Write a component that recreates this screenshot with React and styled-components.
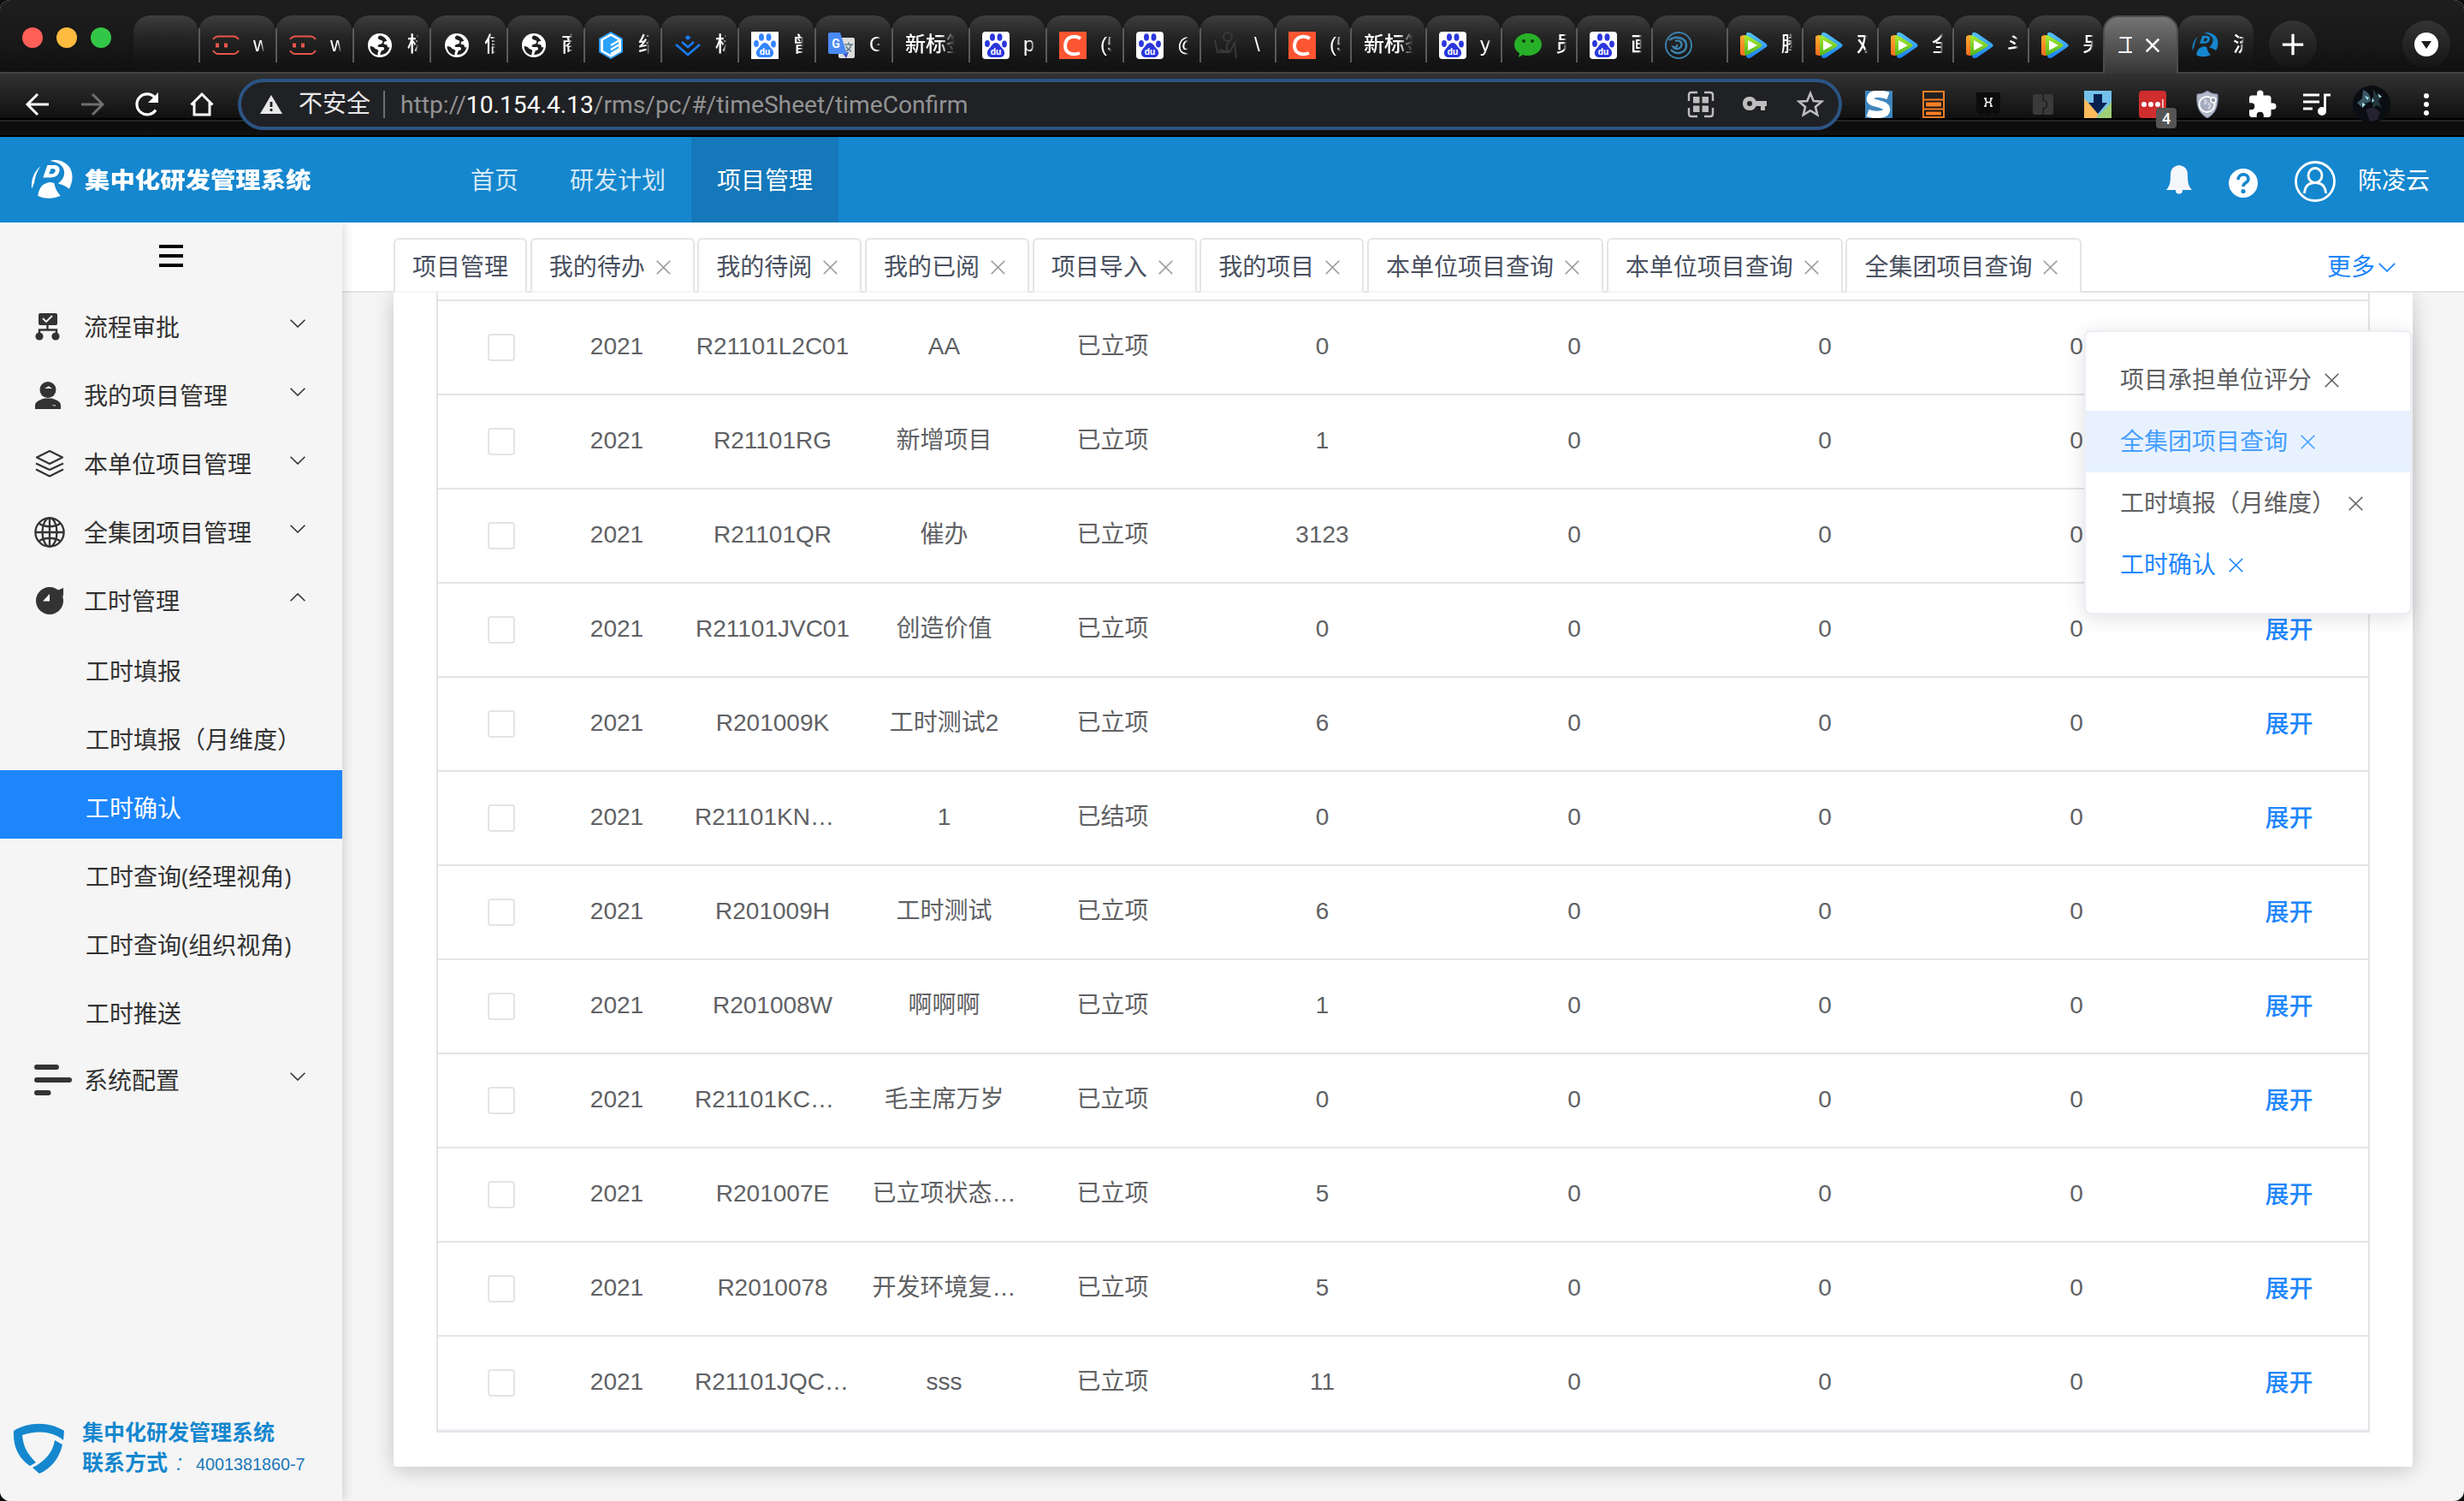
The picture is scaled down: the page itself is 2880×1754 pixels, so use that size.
import React from 'react';
import styled, { createGlobalStyle, css } from 'styled-components';

const SANS = '"Liberation Sans", "Noto Sans CJK SC", sans-serif';
const BLUE = '#1d86fd';
const LINE = '#e4e4e4';

const GlobalStyle = createGlobalStyle`
  * { box-sizing: border-box; }
  body { margin: 0; background: #0b0f0b; font-family: ${SANS}; }
`;

const Window = styled.div`
  width: 2880px;
  height: 1754px;
  display: flex;
  flex-direction: column;
  overflow: hidden;
  border-radius: 12px;
  background: #f5f5f5;
  font-size: 28px;
`;

/* ---------- browser chrome ---------- */

const TabStrip = styled.div`
  height: 84px;
  flex: none;
  display: flex;
  align-items: flex-start;
  background: linear-gradient(#1e1e1e, #181818 60%, #101010);
`;

const Lights = styled.div`
  width: 156px;
  height: 84px;
  padding: 4px 0 0 26px;
  display: flex;
  align-items: center;
  gap: 16px;
`;

const Light = styled.span`
  width: 24px;
  height: 24px;
  border-radius: 50%;
  background: ${(p) => p.$color};
`;

const BrowserTab = styled.div`
  width: ${(p) => p.$width}px;
  height: 66px;
  margin-top: 18px;
  display: flex;
  align-items: center;
  flex: none;
  border-radius: 20px 20px 0 0;
  background: linear-gradient(#3e3e3e, #262626 35%, #161616 75%, #111111);
  color: #fff;
`;

const TabInner = styled.div`
  height: 40px;
  padding-left: 14px;
  border-left: 2px solid ${(p) => (p.$divider ? '#5a5a5a' : 'transparent')};
  display: flex;
  align-items: center;
  margin-top: 3px;
`;

const TabTitle = styled.span`
  width: ${(p) => (p.$plain ? 58 : 13)}px;
  margin-left: ${(p) => (p.$plain ? 0 : 16)}px;
  overflow: hidden;
  white-space: nowrap;
  font-size: 24px;
  font-weight: 500;
  line-height: 36px;
  padding-bottom: 1px;
  mask-image: linear-gradient(90deg, #000 70%, transparent);
`;

const ActiveTab = styled.div`
  width: 88px;
  height: 68px;
  margin: 18px 0 -2px;
  padding-left: 15px;
  display: flex;
  align-items: center;
  gap: 16px;
  flex: none;
  position: relative;
  z-index: 1;
  border-radius: 18px 18px 0 0;
  border: 2px solid #4c4c4c;
  border-bottom: 0;
  background: linear-gradient(#747474, #555 50%, #363636);
  color: #fff;
  font-size: 24px;
  line-height: 36px;
`;

const Clip = styled.span`
  width: 17px;
  overflow: hidden;
  white-space: nowrap;
`;

const RoundButton = styled.div`
  width: 56px;
  height: 56px;
  margin: 24px 0 0 ${(p) => p.$gap}px;
  border-radius: 50%;
  display: flex;
  align-items: center;
  justify-content: center;
  background: linear-gradient(#343434, #141414);
`;

const Toolbar = styled.div`
  height: 76px;
  flex: none;
  padding: 0 12px;
  display: flex;
  align-items: center;
  background: linear-gradient(
    #434343 0 2px, #323232 2px, #101010 54px, #000 54px 56px,
    #242424 56px 58px, #0c0c0c 58px, #101010 74px, #000 74px
  );
`;

const Tool = styled.div`
  width: 64px;
  height: 60px;
  display: flex;
  align-items: center;
  justify-content: center;
  flex: none;
  position: relative;
`;

const AddressBar = styled.div`
  width: 1875px;
  height: 60px;
  margin: 0 11px 0 10px;
  padding: 0 1px 0 22px;
  flex: none;
  display: flex;
  align-items: center;
  border: 4px solid #2c5483;
  border-radius: 30px;
  background: #202124;
  color: #e8e8e8;
`;

const Insecure = styled.span`
  margin-left: 19px;
  font-size: 28px;
  line-height: 40px;
`;

const Separator = styled.span`
  width: 2px;
  height: 32px;
  margin: 0 18px 0 15px;
  background: #6d6e70;
`;

const Url = styled.span`
  flex: 1;
  font-family: Roboto, sans-serif;
  font-size: 28.2px;
  color: #919294;
  line-height: 40px;
  padding-top: 1px;
  b { font-weight: 400; color: #fff; }
`;

const Count = styled.span`
  position: absolute;
  left: 36px;
  top: 34px;
  width: 24px;
  height: 24px;
  border-radius: 4px;
  background: #555;
  color: #fff;
  font: 500 18px/26px Roboto, sans-serif;
  text-align: center;
`;

/* ---------- application header ---------- */

const Header = styled.header`
  height: 100px;
  flex: none;
  display: flex;
  align-items: center;
  padding-left: 36px;
  background: #1587ce;
  color: #fff;
`;

const Brand = styled.div`
  width: 484px;
  display: flex;
  align-items: center;
  gap: 12px;
`;

const BrandName = styled.span`
  padding-top: 2px;
  font-size: 29.4px;
  line-height: 40px;
  font-weight: 900;
  transform: scaleY(0.9);
  white-space: nowrap;
`;

const NavItem = styled.a`
  height: 100px;
  padding: 0 30px;
  line-height: 103px;
  color: ${(p) => (p.$active ? '#fff' : '#d3e8f6')};
  background: ${(p) => (p.$active ? '#1478ba' : 'transparent')};
`;

const UserArea = styled.div`
  margin-left: auto;
  padding-right: 40px;
  display: flex;
  align-items: center;
  line-height: 40px;
`;

const UserName = styled.span`
  padding-top: 3px;
`;

const IconBox = styled.span`
  display: flex;
  margin: ${(p) => p.$m || 0};
`;

/* ---------- sidebar ---------- */

const Body = styled.div`
  flex: 1;
  display: flex;
  min-height: 0;
`;

const Sidebar = styled.aside`
  width: 400px;
  flex: none;
  display: flex;
  flex-direction: column;
  position: relative;
  z-index: 3;
  background: #f5f5f5;
  box-shadow: 2px 0 12px rgba(0, 0, 0, 0.16);
  clip-path: inset(0 -20px 0 0);
  color: #333;
`;

const Toggle = styled.div`
  height: 80px;
  padding-top: 26px;
  display: flex;
  flex-direction: column;
  align-items: center;
  gap: 7px;
`;

const Bar = styled.span`
  width: 28px;
  height: 4px;
  background: #000;
`;

const MenuItem = styled.div`
  height: 80px;
  padding-left: 40px;
  padding-right: 43px;
  display: flex;
  align-items: center;
`;

const MenuIcon = styled.span`
  width: 58px;
  display: flex;
  padding-top: 3px;
`;

const MenuLabel = styled.span`
  flex: 1;
  line-height: 40px;
  padding-top: 8px;
`;

const MenuArrow = styled.span`
  display: flex;
  padding-bottom: 5px;
`;

const SubItem = styled.div`
  height: 80px;
  padding: 9px 0 0 100px;
  font-family: "Open Sans", "Noto Sans CJK SC", sans-serif;
  line-height: 70px;
  white-space: nowrap;
  color: ${(p) => (p.$active ? '#fff' : '#333')};
  background: ${(p) => (p.$active ? BLUE : 'transparent')};
`;

const Support = styled.div`
  margin-top: auto;
  padding: 0 0 25px 15px;
  display: flex;
  align-items: center;
  gap: 20px;
  color: #1587ce;
`;

const SupportText = styled.div`
  font-size: 25px;
  line-height: 35px;
  font-weight: 700;
  white-space: nowrap;
`;

const SupportLine = styled.div`
  display: flex;
  align-items: baseline;
`;

const Tick = styled.i`
  margin-left: 10px;
  width: 23px;
  font-weight: 500;
`;

const Phone = styled.span`
  font-size: 19.8px;
  font-weight: 400;
  color: #1a78b8;
`;

/* ---------- content ---------- */

const Main = styled.main`
  flex: 1;
  display: flex;
  flex-direction: column;
  position: relative;
  min-width: 0;
`;

const PageTabs = styled.div`
  height: 82px;
  flex: none;
  padding: 18px 80px 0 60px;
  display: flex;
  align-items: stretch;
  gap: 3.67px;
  position: relative;
  z-index: 1;
  background: linear-gradient(#fff 0 80px, ${LINE} 80px);
`;

const PageTab = styled.div`
  height: 64px;
  padding: 4px ${(p) => (p.$closable ? 26 : 20)}px 0 20px;
  display: flex;
  align-items: center;
  gap: 13px;
  flex: none;
  border: 2px solid ${LINE};
  border-bottom-color: #f5f5f5;
  border-radius: 6px 6px 0 0;
  background: #fff;
  color: #495060;
  line-height: 40px;
  white-space: nowrap;
`;

const TabLabel = styled.span`
  padding-top: 2px;
`;

const More = styled.div`
  margin-left: auto;
  display: flex;
  align-items: center;
  gap: 4px;
  height: 64px;
  padding-top: 4px;
  line-height: 40px;
  color: ${BLUE};
`;

const Card = styled.section`
  width: 2360px;
  height: 1372px;
  margin-left: 60px;
  padding: 0 50px;
  background: #fff;
  border-radius: 0 0 4px 4px;
  box-shadow: 0 4px 24px rgba(0, 0, 0, 0.2);
`;

const Table = styled.div`
  width: 2260px;
  padding-top: 8px;
  border: 2px solid ${LINE};
  border-top: 0;
`;

const Row = styled.div`
  height: 110px;
  display: grid;
  grid-template-columns: 128px 162px 202px 199px 195px 295px 294px 292px 296px 193px;
  align-items: center;
  border-top: 2px solid ${LINE};
  color: #606164;
  text-align: center;
  line-height: 40px;
  &:last-child {
    height: 112px;
    border-bottom: 2px solid #ebeef5;
  }
`;

const Cell = styled.span`
  padding-bottom: 2px;
  white-space: nowrap;
`;

const CodeCell = styled(Cell)`
  padding-left: ${(p) => (p.$truncated ? 10 : 0)}px;
  text-align: ${(p) => (p.$truncated ? 'left' : 'center')};
`;

const Checkbox = styled.span`
  width: 32px;
  height: 32px;
  margin-left: 58px;
  border: 2px solid ${LINE};
  border-radius: 4px;
  background: #fff;
`;

const Expand = styled.a`
  padding: 1px 0 0 8px;
  font-weight: 500;
  color: ${BLUE};
`;

const Dropdown = styled.div`
  position: absolute;
  z-index: 2;
  left: 2036px;
  top: 126px;
  width: 383px;
  padding: 20px 0;
  border: 2px solid #ebeef5;
  border-radius: 8px;
  background: #fff;
  box-shadow: 0 4px 24px rgba(0, 0, 0, 0.12);
`;

const tones = {
  normal: css`color: #606164;`,
  hover: css`color: #479fff; background: #e8f2ff;`,
  active: css`color: ${BLUE};`,
};

const DropItem = styled.div`
  height: 72px;
  padding-left: 40px;
  display: flex;
  align-items: center;
  gap: 15px;
  line-height: 40px;
  ${(p) => tones[p.$tone]}
`;

/* ---------- icons ---------- */

const Close = ({ size = 17, width = 1.6, color = 'currentColor' }) => (
  <svg width={size} height={size} viewBox="0 0 17 17" fill="none" stroke={color} strokeWidth={width}>
    <path d="M.7.7l15.6 15.6M16.3.7.7 16.3" />
  </svg>
);

const Chevron = ({ up, size = 18 }) => (
  <svg width={size} height={size / 2 + 1} viewBox="0 0 18 10" fill="none" stroke="currentColor" strokeWidth="1.6">
    <path d={up ? 'M.6 9.3 9 1l8.4 8.3' : 'M.6.7 9 9 17.4.7'} />
  </svg>
);

const Emblem = ({ size, color }) => (
  <svg width={size} height={size * 0.9} viewBox="0 0 50 45" fill={color}>
    <path d="M11 7C4 13 0 22 1 33l3-7C5 18 8 12 11 7Z" />
    <path d="M22 1c9-3 18 1 23 8 4 8 3 16-1 24-4-3-8-5-13-6 7-5 9-12 6-18C34 4 28 2 22 1Z" />
    <path fillRule="evenodd" d="M19 6h9c5 1 6 5 4 9-2 4-5 5-9 5H14Zm4 4-2 6h3c4 0 6-6 2-6Z" />
    <path d="M17 27c-5 1-8 8-9 14 7 4 18 4 26 0-4-5-6-8-7-14-3-2-7-2-10 0Z" />
  </svg>
);

const Face = () => (
  <svg width="32" height="32" viewBox="0 0 32 32" fill="none" stroke="#e8564a" strokeWidth="2">
    <path d="M1 9c2-2.500 3-3.500 6-3.500h18c3 0 4 1 6 3.500M1 22c2 3 3 4 6 4h18c3 0 4-1 6-4" />
    <path d="M6 13.500v5M16 13.500v5" strokeWidth="4" />
  </svg>
);

const GlobeTab = () => (
  <svg width="32" height="32" viewBox="0 0 32 32">
    <circle cx="16" cy="16" r="14" fill="#fff" />
    <path fill="#1e1e1e" d="M16 4.500c-3 1.500-3 4 0 5l3 1c1 3-1 4-4 4.500-2 1-2 3 1 3h4c2 2 1 4-2 4l-2 5c6 0 10-3 11.500-9-2 1-3 0-3-2.500l-4-1c0-3 2-4 4-3.500C22 7 20 5 16 4.500ZM4.500 17c0 5 4 10 9 10.500v-3c2-2 0-4-3-4.500-1-2-3-3-6-3Z" />
  </svg>
);

const Hex = () => (
  <svg width="32" height="32" viewBox="0 0 32 32">
    <path d="M16 1 29 8.500v15L16 31 3 23.500v-15Z" fill="#fff" stroke="#2b9cf5" strokeWidth="2" />
    <path d="M16 5 25 10v12l-9 5-9-5V10Z" fill="#2ba2fb" />
    <path d="M16 16l10-6M16 21l10-6M16 26l10-6" stroke="#fff" strokeWidth="2.300" />
  </svg>
);

const Arrows = () => (
  <svg width="32" height="32" viewBox="0 0 32 32" fill="none" stroke="#1b7bf2" strokeWidth="2.600">
    <path d="m2 15 14 12 14-12M9 12l7 6 7-6" />
    <path d="m16 4 3.500 3-3.500 3-3.500-3Z" fill="#1b7bf2" stroke="none" />
  </svg>
);

const Paw = ({ color = '#2b36dc' }) => (
  <svg width="32" height="32" viewBox="0 0 32 32">
    <rect width="32" height="32" rx={color === '#2b36dc' ? 4 : 0} fill="#fff" />
    <g fill={color}>
      <ellipse cx="12" cy="6.500" rx="3" ry="4.300" />
      <ellipse cx="20.500" cy="6.500" rx="3" ry="4.300" />
      <ellipse cx="6" cy="14" rx="2.900" ry="4" />
      <ellipse cx="26" cy="14.500" rx="2.900" ry="4" />
      <path d="M16 13c4 0 5 4 8 7 4 4 2 10-3 10H11c-5 0-7-6-3-10 3-3 4-7 8-7Z" />
    </g>
    <text x="16" y="27" textAnchor="middle" fontSize="11" fontWeight="700" fontFamily="Roboto" fill="#fff">du</text>
  </svg>
);

const Translate = () => (
  <svg width="32" height="32" viewBox="0 0 32 32">
    <rect x="12" y="7" width="19" height="24" rx="2" fill="#dcdcdc" />
    <path d="m16 24 5 7 3-7Z" fill="#3a4fc4" />
    <path d="M2 1h12l8 25H2a2 2 0 0 1-2-2V3a2 2 0 0 1 2-2Z" fill="#4a8af4" />
    <text x="9" y="19" textAnchor="middle" fontSize="14" fontWeight="700" fontFamily="Roboto" fill="#fff">G</text>
    <path d="M19 15h10M24 12.500V15m3 0c-1 4-3 6-6 8m0-6c1 3 4 5 6 6" fill="none" stroke="#5f7d8c" strokeWidth="1.600" />
  </svg>
);

const LetterC = () => (
  <svg width="32" height="32" viewBox="0 0 32 32">
    <rect width="32" height="32" fill="#fc5531" />
    <path d="M25 8c-7-4-17-3-18 8 0 10 9 12 17 9" fill="none" stroke="#fff" strokeWidth="4" />
  </svg>
);

const Sketch = () => (
  <svg width="32" height="32" viewBox="0 0 32 32" fill="none" stroke="#3a3838" strokeWidth="2">
    <circle cx="17" cy="6" r="5" />
    <path d="M2 10l3 14h14L7 21m13-9C14 14 14 22 20 23l5-10 2 18" />
  </svg>
);

const Wechat = () => (
  <svg width="32" height="32" viewBox="0 0 32 32">
    <path d="M16 2c9 0 16 6 16 13s-7 13-16 13c-2 0-4 0-6-1l-5 3 1-5c-4-2-6-6-6-10C0 8 7 2 16 2Z" fill="#28b028" />
    <circle cx="11" cy="11" r="2" fill="#0d3b10" />
    <circle cx="21" cy="11" r="2" fill="#0d3b10" />
  </svg>
);

const Spiral = () => (
  <svg width="32" height="32" viewBox="0 0 32 32" fill="none" stroke="#3c80ab" strokeWidth="2">
    <circle cx="16" cy="16" r="15" />
    <path d="M5 10C12 4 25 7 25 16c0 9-12 12-18 5" strokeWidth="2.600" />
    <path d="M12 11c5-2 9 2 7 6s-7 4-9 1c3 1 5-1 4-3" strokeWidth="2.400" />
  </svg>
);

const Play = () => (
  <svg width="32" height="32" viewBox="0 0 32 32">
    <defs>
      <linearGradient id="pb" x2="0" y2="1"><stop stopColor="#55c4fb" /><stop offset="1" stopColor="#1b80f0" /></linearGradient>
      <linearGradient id="pg" x2="0" y2="1"><stop stopColor="#a8ec30" /><stop offset="1" stopColor="#52b51c" /></linearGradient>
      <linearGradient id="po" x2="0" y2="1"><stop stopColor="#ffb02e" /><stop offset="1" stopColor="#fb6a1d" /></linearGradient>
    </defs>
    <path d="M0 7c0-2 1-3 6-3v24c-5 0-6-1-6-3Z" fill="url(#po)" />
    <path d="M7 3c0-3 4-2 6-1l16 11c4 3 3 4 0 6L13 30c-3 2-6 1-6-2Z" fill="url(#pb)" />
    <path d="M5 6c0-2 2-2 4-1l15 9c2 1 2 3 0 4L9 27c-2 1-4 1-4-1Z" fill="url(#pg)" />
    <path d="M9 10v12l11-6Z" fill="#fff" />
  </svg>
);

const Stroke = ({ size = 32, w = 3, color = '#fff', children, d }) => (
  <svg width={size} height={size} viewBox="0 0 32 32" fill="none" stroke={color} strokeWidth={w}>
    <path d={d} />
    {children}
  </svg>
);

const Warning = () => (
  <svg width="26" height="22" viewBox="0 0 26 22">
    <path d="M13 0 26 22H0Z" fill="#e8e8e8" />
    <path d="M13 8v6M13 16v3" stroke="#202124" strokeWidth="2.800" />
  </svg>
);

const QrIcon = () => (
  <Stroke w={2.4} color="#bdbdbd" d="M2 12V5q0-3 3-3h7M20 2h7q3 0 3 3v7M30 20v7q0 3-3 3h-7M12 30H5q-3 0-3-3v-7">
    <path d="M7 7h7.500v7.500H7ZM17.500 7H25v7.500h-7.500ZM7 17.500h7.500V25H7ZM17.500 17.500H25V25h-7.500Z" fill="#bdbdbd" stroke="none" />
  </Stroke>
);

const KeyIcon = () => (
  <svg width="30" height="20" viewBox="0 0 30 20">
    <path fill="#bdbdbd" fillRule="evenodd" d="M8 1c4 0 6.500 2 7.500 5H28v6h-2v5h-5v-5h-5.500c-1 3-3.500 5-7.500 5C3 17 0 13.500 0 9s3-8 8-8Zm0 5a3 3 0 1 0 0 6 3 3 0 0 0 0-6Z" />
  </svg>
);

const ExtS = () => (
  <svg width="32" height="32" viewBox="0 0 32 32">
    <rect width="32" height="32" fill="#3f86bd" />
    <path d="M27 6C19 3 6 2 6 10c0 6 19 4 19 12 0 7-14 7-22 4" fill="none" stroke="#fff" strokeWidth="8.500" />
  </svg>
);

const ExtServer = () => (
  <svg width="26" height="32" viewBox="0 0 26 32" fill="none" stroke="#fa7e26" strokeWidth="2">
    <path d="M1 1h24v30H1ZM1 10.500h24M1 21.500h24" />
    <path d="M4 13.500h18v5H4ZM4 24.500h18v4H4Z" fill="#fa7e26" stroke="none" />
  </svg>
);

const ExtH = () => (
  <svg width="28" height="30" viewBox="0 0 28 30">
    <path d="M0 1h28v22l-5 4-4-2-5 3-5-3-4 2-5-4Z" fill="#0c0c0c" />
    <path d="M9 8h3M16 8h3M9 17h3M16 17h3M11 8v3l1.500 1.500L11 14v3M17 8v3l-1.500 1.500L17 14v3M12 12.500h4" stroke="#fff" strokeWidth="1.500" fill="none" />
  </svg>
);

const ExtPuzzleDark = () => (
  <svg width="24" height="24" viewBox="0 0 24 24">
    <rect width="24" height="24" rx="3" fill="#3a3a3a" />
    <path d="M12 0v7c6 0 6 10 0 10v7" fill="none" stroke="#1c1c1c" strokeWidth="1.500" />
  </svg>
);

const ExtMap = () => (
  <svg width="32" height="32" viewBox="0 0 32 32">
    <rect width="32" height="32" fill="#74c0ea" />
    <path d="M0 9l17 18-3 5H0Z" fill="#fdbb5c" />
    <path d="M32 13 14 32h18Z" fill="#9fd075" />
    <path d="M11 4h10v10h6L16 27 5 14h6Z" fill="#06214f" />
  </svg>
);

const ExtPass = () => (
  <svg width="32" height="32" viewBox="0 0 32 32">
    <rect width="32" height="32" rx="4" fill="#cf2d2e" />
    <g fill="#fff"><circle cx="6" cy="16" r="3" /><circle cx="14" cy="16" r="3" /><circle cx="22" cy="16" r="3" /></g>
    <path d="M28 10v12" stroke="#f2b9b9" strokeWidth="2" />
  </svg>
);

const ExtShield = () => (
  <svg width="26" height="32" viewBox="0 0 26 32">
    <path d="M13 0c4 3 8 4 12 4 1 12-1 22-12 28C2 26 0 16 1 4c4 0 8-1 12-4Z" fill="#b3b9c9" stroke="#78829a" />
    <circle cx="12.500" cy="16" r="9" fill="#a3abbd" stroke="#fff" strokeWidth="2" />
    <circle cx="20" cy="11" r="3" fill="#8c96ac" stroke="#fff" strokeWidth="1.500" />
    <path d="M9 11c4 0 3 4 0 4m5 0c3 1 3 4 0 6" stroke="#c9cfdb" strokeWidth="3" fill="none" />
  </svg>
);

const PuzzleIcon = () => (
  <svg width="36" height="36" viewBox="0 0 24 24" fill="#fff">
    <path d="M20.500 11H19V7c0-1.100-.9-2-2-2h-4V3.500a2.500 2.500 0 0 0-5 0V5H4c-1.100 0-2 .9-2 2v3.800h1.500a2.700 2.700 0 0 1 0 5.400H2V20c0 1.100.9 2 2 2h3.800v-1.500a2.700 2.700 0 0 1 5.400 0V22H17c1.100 0 2-.9 2-2v-4h1.500a2.500 2.500 0 0 0 0-5Z" />
  </svg>
);

const MusicIcon = () => (
  <Stroke w={2.8} d="M0 5h19M0 13h19M0 21h11">
    <path d="M25.500 24V5H32" />
    <circle cx="22" cy="24" r="5" fill="#fff" stroke="none" />
  </Stroke>
);

const Avatar = () => (
  <svg width="44" height="44" viewBox="0 0 44 44">
    <circle cx="22" cy="22" r="22" fill="#0a0d12" />
    <path d="M12 5c6 2 9 7 9 13-4 4-8 0-11 7L5 20l6-5Z" fill="#3a5864" />
    <path d="M24 4l4 7 6 2-4 5 4 8-6-3-5 4 1-10Z" fill="#25363f" />
    <path d="M14 12l5 2-2 3ZM29 9l5 4-3 1ZM11 20l4 2-4 4ZM23 14l2 4-3 2Z" fill="#a5e4e8" />
    <path d="M15 28l9-3 8 6-3 9-9 2Z" fill="#262231" />
  </svg>
);

const Bell = () => (
  <svg width="30" height="34" viewBox="0 0 30 34" fill="#f5f6fa">
    <path d="M15 0c6 1 10 4 10 11 0 10 1 13 5 18H0c4-5 5-8 5-18C5 4 9 1 15 0Z" />
    <path d="M11 29h8c0 3-1 4.500-4 4.500S11 32 11 29Z" />
  </svg>
);

const Help = () => (
  <svg width="34" height="34" viewBox="0 0 34 34">
    <circle cx="17" cy="17" r="17" fill="#fff" />
    <path d="M11 13c0-8 12-8 12-1 0 5-6 4-6 9" fill="none" stroke="#1587ce" strokeWidth="3.600" />
    <circle cx="17" cy="26.500" r="2.600" fill="#1587ce" />
  </svg>
);

const UserIcon = () => (
  <svg width="48" height="48" viewBox="0 0 48 48" fill="none" stroke="#fff" strokeWidth="2.800">
    <circle cx="24" cy="24" r="22.500" />
    <ellipse cx="24" cy="17" rx="8" ry="8.500" />
    <path d="M11.500 38c.5-8 5-12.500 12.500-12.500S36 30 36.500 38" />
  </svg>
);

const sideIcons = {
  flow: (
    <svg width="32" height="34" viewBox="0 0 32 34" fill="#333">
      <rect x="5" y="1" width="22" height="14" rx="2" />
      <path d="m10 7 4 4 7-7" fill="none" stroke="#f5f5f5" strokeWidth="1.800" />
      <path d="M15.500 14v6M6 27v-6.500h20V27" fill="none" stroke="#333" strokeWidth="2.400" />
      <circle cx="6" cy="28" r="4.600" /><circle cx="25" cy="28" r="4.600" />
    </svg>
  ),
  person: (
    <svg width="33" height="34" viewBox="0 0 33 34" fill="#333">
      <circle cx="16" cy="10.500" r="9.500" />
      <path d="M1 33v-5c1-4 6-6 11-7.500h8c6 1.500 10 3.500 11 7.500v5Z" />
      <path d="m12 9 5-2.800L21 9ZM20 28l5 .5-.5 1.300Z" fill="#f5f5f5" />
    </svg>
  ),
  layers: (
    <svg width="36" height="34" viewBox="0 0 36 34" fill="none" stroke="#333" strokeWidth="2.200" strokeLinejoin="round">
      <path d="M18 2 33 9.500 18 17 3 9.500ZM2 16.500 18 24l16-7.500M2 23.500 18 31.500l16-8" />
    </svg>
  ),
  globe: (
    <svg width="36" height="36" viewBox="0 0 36 36" fill="none" stroke="#333" strokeWidth="2.300">
      <circle cx="18" cy="18" r="16.600" /><ellipse cx="18" cy="18" rx="8.500" ry="16.600" />
      <path d="M18 1v34M1 18h34M5 7.500c8 5 18 5 26 0M5 28.500c8-5 18-5 26 0" />
    </svg>
  ),
  clock: (
    <svg width="36" height="34" viewBox="0 0 36 34" fill="#333">
      <circle cx="18" cy="17" r="16" />
      <path d="M27 5l7-3v10Z" />
      <path d="M18 9v8.500h-8Z" fill="#fff" />
    </svg>
  ),
  config: (
    <svg width="44" height="36" viewBox="0 0 44 36" stroke="#333" strokeWidth="6" strokeLinecap="round">
      <path d="M3 3h23M3 18h38M3 33h13.500" />
    </svg>
  ),
};

const Shield = () => (
  <svg width="61" height="60" viewBox="0 0 61 60" fill="#1587ce">
    <path d="M1 9C18-2 43-2 60 9l-1 11C45 8 26 9 11 14c1 13 6 22 16 32l-7 4C7 41 0 28 1 9Z" />
    <path d="M49 20l9 5c-3 15-13 28-27 34l-8-7c14-7 24-18 26-32Z" />
  </svg>
);

/* ---------- data ---------- */

const browserTabs = [
  [90, Face, 'w'], [90, Face, 'w'], [90, GlobeTab, '标'], [90, GlobeTab, '信'], [90, GlobeTab, '商'],
  [90, Hex, '绍'], [90, Arrows, '标'], [90, () => <Paw color="#3385ff" />, '曾'], [90, Translate, 'G'],
  [90, null, '新标签'], [90, Paw, 'p'], [90, LetterC, '(5'], [90, Paw, '@'], [88, Sketch, '\\'],
  [88, LetterC, '(5'], [88, null, '新标签'], [88, Paw, 'y'], [88, Wechat, '员'], [88, Paw, '画'],
  [88, Spiral, ''], [88, Play, '腾'], [88, Play, '双'], [88, Play, '全'], [88, Play, '斗'], [88, Play, '另'],
];

const menu = [
  ['flow', '流程审批'],
  ['person', '我的项目管理'],
  ['layers', '本单位项目管理'],
  ['globe', '全集团项目管理'],
  ['clock', '工时管理', true],
];

const subMenu = ['工时填报', '工时填报（月维度）', '工时确认', '工时查询(经理视角)', '工时查询(组织视角)', '工时推送'];

const pageTabs = ['项目管理', '我的待办', '我的待阅', '我的已阅', '项目导入', '我的项目', '本单位项目查询', '本单位项目查询', '全集团项目查询'];

const rows = [
  ['R21101L2C01', 'AA', '已立项', '0'],
  ['R21101RG', '新增项目', '已立项', '1'],
  ['R21101QR', '催办', '已立项', '3123'],
  ['R21101JVC01', '创造价值', '已立项', '0'],
  ['R201009K', '工时测试2', '已立项', '6'],
  ['R21101KN…', '1', '已结项', '0'],
  ['R201009H', '工时测试', '已立项', '6'],
  ['R201008W', '啊啊啊', '已立项', '1'],
  ['R21101KC…', '毛主席万岁', '已立项', '0'],
  ['R201007E', '已立项状态…', '已立项', '5'],
  ['R2010078', '开发环境复…', '已立项', '5'],
  ['R21101JQC…', 'sss', '已立项', '11'],
];

const dropItems = [
  ['项目承担单位评分', 'normal'],
  ['全集团项目查询', 'hover'],
  ['工时填报（月维度）', 'normal'],
  ['工时确认', 'active'],
];

/* ---------- page ---------- */

const Chrome = () => (
  <>
    <TabStrip>
      <Lights>
        <Light $color="#fe5f57" /><Light $color="#febb40" /><Light $color="#33c748" />
      </Lights>
      <BrowserTab $width={76} />
      {browserTabs.map(([width, Icon, title], i) => (
        <BrowserTab key={i} $width={width}>
          <TabInner $divider>
            {Icon && <Icon />}
            <TabTitle $plain={!Icon}>{title}</TabTitle>
          </TabInner>
        </BrowserTab>
      ))}
      <ActiveTab>
        <Clip>工</Clip>
        <Close size={16} width={2.8} />
      </ActiveTab>
      <BrowserTab $width={88}>
        <TabInner>
          <Emblem size={32} color="#1587ce" />
          <TabTitle>流</TabTitle>
        </TabInner>
      </BrowserTab>
      <RoundButton $gap={18}><Stroke size={26} w={4} d="M16 1v30M1 16h30" /></RoundButton>
      <RoundButton $gap={100}>
        <svg width="28" height="28" viewBox="0 0 28 28">
          <circle cx="14" cy="14" r="14" fill="#fff" />
          <path d="M8 10h12l-6 9Z" fill="#1c1c1c" />
        </svg>
      </RoundButton>
    </TabStrip>
    <Toolbar>
      <Tool><Stroke d="M29 16H5M16 4 4 16l12 12" /></Tool>
      <Tool><Stroke color="#6f6f6f" d="M3 16h24M16 4l12 12-12 12" /></Tool>
      <Tool>
        <Stroke w={3.2} d="M26 22.500A12 12 0 1 1 25 8">
          <path d="M29 2v12H17Z" fill="#fff" stroke="none" />
        </Stroke>
      </Tool>
      <Tool><Stroke w={3} d="M3.500 16.500 16 4l12.500 12.500M7 14v14h18V14" /></Tool>
      <AddressBar>
        <Warning />
        <Insecure>不安全</Insecure>
        <Separator />
        <Url>http://<b>10.154.4.13</b>/rms/pc/#/timeSheet/timeConfirm</Url>
        <Tool><QrIcon /></Tool>
        <Tool><KeyIcon /></Tool>
        <Tool>
          <Stroke w={2.6} color="#bdbdbd" d="m16 3 3.700 9 9.500.7-7.300 6.200 2.300 9.400L16 23.200l-8.200 5.100 2.300-9.400-7.300-6.200 9.500-.7Z" />
        </Tool>
      </AddressBar>
      <Tool><ExtS /></Tool>
      <Tool><ExtServer /></Tool>
      <Tool><ExtH /></Tool>
      <Tool><ExtPuzzleDark /></Tool>
      <Tool><ExtMap /></Tool>
      <Tool><ExtPass /><Count>4</Count></Tool>
      <Tool><ExtShield /></Tool>
      <Tool><PuzzleIcon /></Tool>
      <Tool><MusicIcon /></Tool>
      <Tool><Avatar /></Tool>
      <Tool>
        <svg width="8" height="28" viewBox="0 0 8 28" fill="#fff">
          <circle cx="4" cy="4" r="3" /><circle cx="4" cy="14" r="3" /><circle cx="4" cy="24" r="3" />
        </svg>
      </Tool>
    </Toolbar>
  </>
);

const Group = ({ icon, label, open }) => (
  <MenuItem>
    <MenuIcon>{sideIcons[icon]}</MenuIcon>
    <MenuLabel>{label}</MenuLabel>
    <MenuArrow><Chevron up={open} /></MenuArrow>
  </MenuItem>
);

export default function App() {
  return (
    <Window>
      <GlobalStyle />
      <Chrome />
      <Header>
        <Brand>
          <Emblem size={51} color="#fff" />
          <BrandName>集中化研发管理系统</BrandName>
        </Brand>
        <NavItem>首页</NavItem>
        <NavItem>研发计划</NavItem>
        <NavItem $active>项目管理</NavItem>
        <UserArea>
          <IconBox><Bell /></IconBox>
          <IconBox $m="8px 0 0 43px"><Help /></IconBox>
          <IconBox $m="4px 26px 0 43px"><UserIcon /></IconBox>
          <UserName>陈凌云</UserName>
        </UserArea>
      </Header>
      <Body>
        <Sidebar>
          <Toggle><Bar /><Bar /><Bar /></Toggle>
          {menu.map(([icon, label, open]) => <Group key={icon} icon={icon} label={label} open={open} />)}
          {subMenu.map((label) => <SubItem key={label} $active={label === '工时确认'}>{label}</SubItem>)}
          <Group icon="config" label="系统配置" />
          <Support>
            <Shield />
            <SupportText>
              <div>集中化研发管理系统</div>
              <SupportLine>联系方式<Tick>:</Tick><Phone>4001381860-7</Phone></SupportLine>
            </SupportText>
          </Support>
        </Sidebar>
        <Main>
          <PageTabs>
            {pageTabs.map((label, i) => (
              <PageTab key={i} $closable={i > 0}>
                <TabLabel>{label}</TabLabel>
                {i > 0 && <Close color="#999" />}
              </PageTab>
            ))}
            <More><TabLabel>更多</TabLabel><Chevron size={20} /></More>
          </PageTabs>
          <Card>
            <Table>
              {rows.map(([code, name, status, hours]) => (
                <Row key={code}>
                  <Checkbox />
                  <Cell>2021</Cell>
                  <CodeCell $truncated={code.endsWith('…')}>{code}</CodeCell>
                  <Cell>{name}</Cell>
                  <Cell>{status}</Cell>
                  <Cell>{hours}</Cell>
                  <Cell>0</Cell>
                  <Cell>0</Cell>
                  <Cell>0</Cell>
                  <Expand>展开</Expand>
                </Row>
              ))}
            </Table>
          </Card>
          <Dropdown>
            {dropItems.map(([label, tone]) => (
              <DropItem key={label} $tone={tone}><TabLabel>{label}</TabLabel><Close /></DropItem>
            ))}
          </Dropdown>
        </Main>
      </Body>
    </Window>
  );
}
